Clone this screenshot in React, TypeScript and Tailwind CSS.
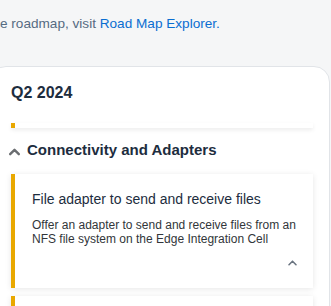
import React from "react";

const font = { fontFamily: '"Liberation Sans", Arial, sans-serif' };

function ChevronUp({ className, sw = 2 }: { className?: string; sw?: number }) {
  return (
    <svg viewBox="0 0 12 8" className={className} fill="none" stroke="currentColor" strokeWidth={sw} strokeLinecap="round" strokeLinejoin="round">
      <path d="M2 6.5 L6 2.5 L10 6.5" />
    </svg>
  );
}

export default function App() {
  return (
    <div className="w-[331px] h-[306px] overflow-hidden bg-[#f5f6f7]" style={font}>
      <div className="pt-[14px] h-[66px] text-[13.6px] leading-[20px] text-[#556b82] whitespace-nowrap">
        e roadmap, visit <span className="text-[#0a6ed1]">Road Map Explorer.</span>
      </div>
      <div className="ml-[-10px] w-[340px] rounded-[16px] border border-[#e1e4e8] bg-white pl-[20px] pr-[16px] pt-[15px]">
        <div className="text-[16px] font-bold leading-[22px] text-[#1d2d3e]">Q2 2024</div>
        <div className="mt-[19px] w-[302px] h-[5px] bg-white border-l-4 border-[#e9a800] shadow-[0_2px_4px_rgba(0,0,0,0.08)]" />
        <div className="flex items-center mt-[12px] ml-[-3px] h-[20px]">
          <ChevronUp className="w-[13px] h-[9px] text-[#6a6d70] mr-[6px] mt-[2px]" sw={2.2} />
          <span className="text-[15px] font-bold text-[#1d2d3e] leading-[20px]">Connectivity and Adapters</span>
        </div>
        <div className="mt-[14px] w-[302px] h-[114px] bg-white border-l-4 border-[#e9a800] shadow-[0_1px_6px_rgba(0,0,0,0.1)] pl-[17px] pr-[15px] pt-[15px]">
          <div className="text-[14px] leading-[20px] text-[#1d2d3e]">File adapter to send and receive files</div>
          <div className="mt-[9px] text-[12px] leading-[14px] text-[#32363a]">
            Offer an adapter to send and receive files from an NFS file system on the Edge Integration Cell
          </div>
          <div className="flex justify-end mt-[13px]">
            <ChevronUp className="w-[11px] h-[7px] text-[#6a7480]" sw={1.8} />
          </div>
        </div>
        <div className="mt-[8px] w-[302px] h-[40px] bg-white border-l-4 border-[#e9a800] shadow-[0_1px_6px_rgba(0,0,0,0.1)]" />
      </div>
    </div>
  );
}
